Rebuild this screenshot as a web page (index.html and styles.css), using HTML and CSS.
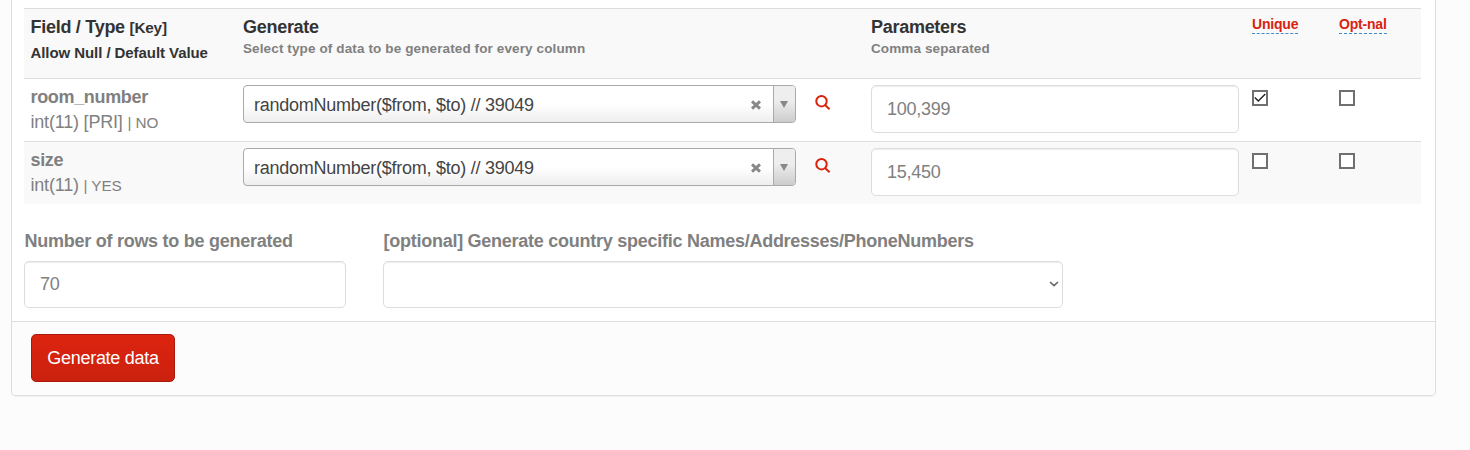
FILE: index.html
```html
<!DOCTYPE html>
<html lang="en">
<head>
<meta charset="utf-8">
<title>Generate data</title>
<link rel="stylesheet" href="styles.css">
</head>
<body>
<form class="panel">
  <div class="panel-body">
    <div class="table">
      <div class="row row-head">
        <div class="cell">
          <div class="title">Field / Type <span class="key">[Key]</span></div>
          <div class="subtitle">Allow Null / Default Value</div>
        </div>
        <div class="cell">
          <div class="title">Generate</div>
          <div class="hint">Select type of data to be generated for every column</div>
        </div>
        <div class="cell">
          <div class="title">Parameters</div>
          <div class="hint">Comma separated</div>
        </div>
        <div class="cell"><span class="tip">Unique</span></div>
        <div class="cell"><span class="tip">Opt-nal</span></div>
      </div>
      <div class="row">
        <div class="cell">
          <div class="name">room_number</div>
          <div class="type">int(11) [PRI] <span class="null">| NO</span></div>
        </div>
        <div class="cell generator">
          <div class="combo">
            <span class="combo-text">randomNumber($from, $to) // 39049</span>
            <svg class="clear" width="12" height="12" viewBox="0 0 12 12"><path d="M2 2.4L10 9.6M10 2.4L2 9.6"/></svg>
            <span class="combo-arrow"><svg width="8" height="7" viewBox="0 0 8 7"><path d="M0 0H8L4 7Z"/></svg></span>
          </div>
          <svg class="search" width="16" height="16" viewBox="0 0 16 16"><circle cx="6.5" cy="6.2" r="5.2"/><path d="M10 10L14.6 14.3"/></svg>
        </div>
        <div class="cell"><input class="field" value="100,399"></div>
        <div class="cell"><span class="check"><svg width="12" height="12" viewBox="0 0 12 12"><path d="M.8 5.6L4.3 9.1L11.3 2.1"/></svg></span></div>
        <div class="cell"><span class="check"></span></div>
      </div>
      <div class="row row-odd">
        <div class="cell">
          <div class="name">size</div>
          <div class="type">int(11) <span class="null">| YES</span></div>
        </div>
        <div class="cell generator">
          <div class="combo">
            <span class="combo-text">randomNumber($from, $to) // 39049</span>
            <svg class="clear" width="12" height="12" viewBox="0 0 12 12"><path d="M2 2.4L10 9.6M10 2.4L2 9.6"/></svg>
            <span class="combo-arrow"><svg width="8" height="7" viewBox="0 0 8 7"><path d="M0 0H8L4 7Z"/></svg></span>
          </div>
          <svg class="search" width="16" height="16" viewBox="0 0 16 16"><circle cx="6.5" cy="6.2" r="5.2"/><path d="M10 10L14.6 14.3"/></svg>
        </div>
        <div class="cell"><input class="field" value="15,450"></div>
        <div class="cell"><span class="check"></span></div>
        <div class="cell"><span class="check"></span></div>
      </div>
    </div>
    <div class="options">
      <div class="option option-rows">
        <label class="label" for="rows">Number of rows to be generated</label>
        <input class="field" id="rows" value="70">
      </div>
      <div class="option option-country">
        <span class="label">[optional] Generate country specific Names/Addresses/PhoneNumbers</span>
        <div class="field select"><svg width="10" height="6" viewBox="0 0 10 6"><path d="M1 1L5 4.6L9 1"/></svg></div>
      </div>
    </div>
  </div>
  <div class="panel-footer">
    <button class="submit" type="button">Generate data</button>
  </div>
</form>
</body>
</html>
```
FILE: styles.css
```css
* { box-sizing: border-box; }

body {
  margin: 0;
  height: 450px;
  overflow: hidden;
  background: #fcfcfc;
  color: #808080;
  font: 18px/26px "Liberation Sans", Arial, sans-serif;
}

.panel {
  width: 1425px;
  height: 396px;
  margin-left: 11px;
  background: #fff;
  border: 1px solid #ddd;
  border-top: 0;
  border-radius: 0 0 5px 5px;
  box-shadow: 0 1px 1px rgba(0, 0, 0, .05);
}

.panel-body {
  height: 321px;
  padding: 8px 14px 0 12px;
}

.row {
  display: grid;
  grid-template-columns: 213px 628px 381px 87px 1fr;
  height: 63px;
  border-top: 1px solid #ddd;
}

.row-head {
  height: 70px;
  background: #f9f9f9;
  color: #333;
  font-weight: bold;
}

.row-odd { background: #f9f9f9; }

.cell { padding: 6px 0 0 6px; white-space: nowrap; }

.row-head .cell { padding-top: 5px; }

.cell:first-child { padding-left: 6.5px; }

.title { font-size: 18px; letter-spacing: -.28px; }
.key { font-size: 15.3px; letter-spacing: -.2px; }
.subtitle { font-size: 15px; line-height: 23px; letter-spacing: -.07px; }
.hint { font-size: 13.5px; line-height: 18px; color: #808080; letter-spacing: .12px; }

.tip {
  display: block;
  width: fit-content;
  height: 20px;
  font-size: 14px;
  line-height: 20px;
  color: #d9230f;
  letter-spacing: -.2px;
  border-bottom: 1px dashed #428bca;
}

.name, .type { line-height: 25px; }
.name { font-weight: bold; letter-spacing: -.33px; }
.type { letter-spacing: -.2px; }
.null { font-size: 15.3px; letter-spacing: -.1px; }

.generator { display: flex; align-items: flex-start; }

.combo {
  display: flex;
  align-items: center;
  width: 553px;
  height: 38px;
  padding-left: 10px;
  border: 1px solid #aaa;
  border-radius: 4px;
  background: linear-gradient(#fff 50%, #eee);
  color: #444;
}

.combo-text { flex: 1; padding-top: 1px; letter-spacing: -.25px; }

.clear {
  margin: 2px 11px 0 0;
  fill: none;
  stroke: #888;
  stroke-width: 3;
}

.combo-arrow {
  display: flex;
  align-items: center;
  justify-content: center;
  width: 22px;
  height: 36px;
  padding-right: 1px;
  border-left: 1px solid #aaa;
  border-radius: 0 3px 3px 0;
  background: linear-gradient(#eee 40%, #ccc);
}

.combo-arrow path { fill: #888; }

.search {
  margin: 10px 0 0 19px;
  fill: none;
  stroke: #d9230f;
  stroke-width: 2;
}

.field {
  display: block;
  width: 368px;
  height: 48px;
  padding: 0 15px;
  border: 1px solid #ddd;
  border-radius: 5px;
  background: #fff;
  box-shadow: inset 0 1px 1px rgba(0, 0, 0, .075);
  color: #808080;
  font: inherit;
  letter-spacing: -.25px;
}

.check {
  display: block;
  width: 16px;
  height: 16px;
  margin-top: 5px;
  border: 2px solid #707070;
  background: #fff;
}

.check svg { display: block; fill: none; stroke: #222; stroke-width: 1.4; }

.options { display: flex; gap: 37px; padding-top: 23px; }
.option-rows { width: 322px; }
.option-country { width: 680px; }

.label {
  display: block;
  height: 34px;
  padding-left: .5px;
  line-height: 28px;
  font-weight: bold;
  letter-spacing: -.26px;
  white-space: nowrap;
}

.option .field { width: 100%; height: 47px; }

.select {
  display: flex;
  align-items: center;
  justify-content: flex-end;
  padding: 0 3px 1px;
}

.select path { fill: none; stroke: #666; stroke-width: 1.6; }

.panel-footer {
  height: 74px;
  padding: 12px 0 0 19px;
  border-top: 1px solid #ddd;
  border-radius: 0 0 4px 4px;
  background: #fcfcfc;
}

.submit {
  width: 144px;
  height: 48px;
  padding: 0;
  border: 1px solid #a91b0c;
  border-radius: 5px;
  background: linear-gradient(#dc2410, #cb210e);
  color: #fff;
  font: inherit;
  letter-spacing: -.28px;
}
```
